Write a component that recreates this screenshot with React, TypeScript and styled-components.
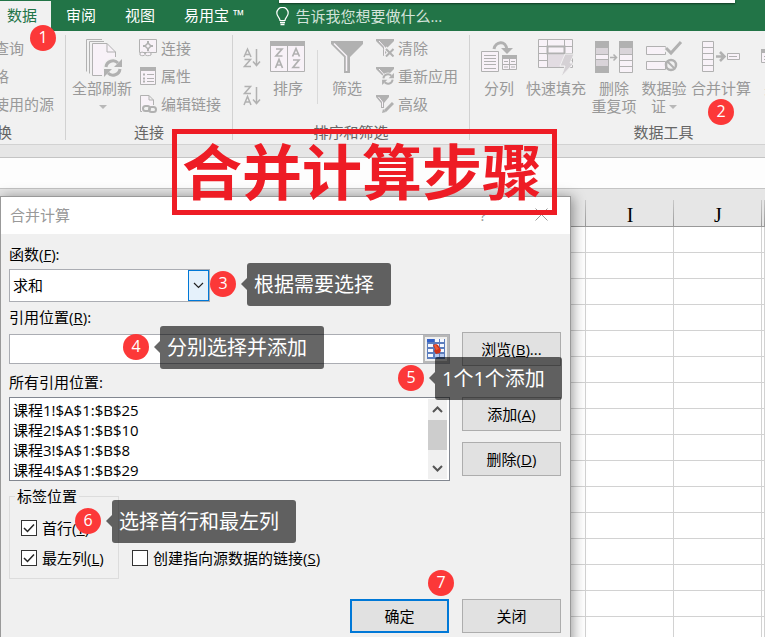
import React from "react";
import styled, { createGlobalStyle, css } from "styled-components";

const GlobalStyle = createGlobalStyle`
  *, *::before, *::after { box-sizing: border-box; }
  body {
    margin: 0;
    font: 15px/20px "Open Sans", "Noto Sans CJK SC", sans-serif;
    color: #000;
    background: #fff;
  }
  button, input, select { font: inherit; color: inherit; margin: 0; }
  #root { overflow: hidden; }
`;

const Page = styled.div`
  position: relative;
  display: flex;
  flex-direction: column;
  height: 100vh;
  overflow: hidden;
`;

/* ---------- tab strip ---------- */

const TabStrip = styled.nav`
  display: flex;
  flex: none;
  align-items: stretch;
  height: 31px;
  padding-top: 1px;
  background: #227447;
  color: #fff;
`;

const Tab = styled.button<{ $active?: boolean }>`
  border: 0;
  padding: 0 14px 3px 15px;
  background: none;
  color: #fff;
  white-space: nowrap;
  ${(p) =>
    p.$active &&
    css`
      padding-left: 7px;
      background: #f1f1f1;
      color: #227447;
    `}
`;

const TellMe = styled.button`
  display: flex;
  align-items: center;
  gap: 6px;
  margin-left: 18px;
  border: 0;
  padding: 0;
  background: none;
  color: #d3e3da;
  white-space: nowrap;
`;

const TopPopup = styled.div`
  position: absolute;
  top: 0;
  left: 279px;
  width: 456px;
  height: 3px;
  background: #fff;
  box-shadow: 0 1px 2px rgba(0, 0, 0, 0.5);
`;

/* ---------- ribbon ---------- */

const Ribbon = styled.div`
  display: flex;
  flex: none;
  height: 114px;
  padding: 4px 0;
  border-bottom: 1px solid #d2d2d2;
  background: #f1f1f1;
  color: #999;
  overflow: hidden;
`;

const Group = styled.section<{ $width: number }>`
  display: flex;
  flex: none;
  flex-direction: column;
  justify-content: space-between;
  width: ${(p) => p.$width}px;
  border-right: 1px solid #d2d2d2;
  overflow: hidden;
`;

const GroupBody = styled.div`
  display: flex;
  height: 86px;
`;

const GroupLabel = styled.div<{ $start?: boolean }>`
  line-height: 16px;
  color: #666;
  text-align: ${(p) => (p.$start ? "left" : "center")};
`;

const CutLabel = styled(GroupLabel)`
  margin-left: -3px;
`;

const CutStack = styled.div`
  margin-left: -6px;
`;

const LargeButton = styled.button<{ $width: number }>`
  display: flex;
  flex: none;
  flex-direction: column;
  align-items: center;
  gap: 2px;
  width: ${(p) => p.$width}px;
  border: 0;
  padding: 2px 0 0;
  background: none;
  line-height: 18px;
  white-space: nowrap;
`;

const SmallStack = styled.div<{ $left?: number }>`
  display: flex;
  flex-direction: column;
  margin-left: ${(p) => p.$left ?? 0}px;
`;

const SmallButton = styled.button`
  display: flex;
  align-items: center;
  gap: 4px;
  height: 28px;
  border: 0;
  padding: 0 0 2px;
  background: none;
  white-space: nowrap;
`;

const SortStack = styled.div`
  display: flex;
  flex-direction: column;
  gap: 17px;
  padding-top: 12px;
  width: 23px;
`;

const SortButton = styled.button`
  display: flex;
  border: 0;
  padding: 0;
  background: none;
`;

const Separator = styled.span`
  width: 1px;
  height: 54px;
  margin: 15px 7px 0;
  background: #d9d9d9;
`;

const Drop = styled.span`
  display: inline-block;
  border: 4px solid transparent;
  border-top-color: #b8b8b8;
  border-bottom: 0;
  margin: 2px 0 0 3px;
`;

const DropLine = styled.span`
  display: flex;
  justify-content: center;
  align-items: center;
  height: 18px;
`;

/* ---------- sheet ---------- */

const FormulaBar = styled.div`
  flex: none;
  height: 44px;
  border-top: 12px solid #e6e6e6;
  background: #fdfdfd;
  box-shadow: inset 0 1px #c4c4c4, inset 0 -1px #c4c4c4;
`;

const Workspace = styled.main`
  display: grid;
  flex: 1;
  min-height: 0;
  align-items: start;
`;

const Sheet = styled.table`
  grid-area: 1 / 1;
  width: 100%;
  table-layout: fixed;
  border-collapse: separate;
  border-spacing: 0;
  th {
    height: 38px;
    border-bottom: 1px solid #999;
    padding: 14px 0 0;
    background: linear-gradient(#c8c8c8, #999) right bottom / 1px 26px no-repeat #e6e6e6;
    font: 20px/20px "Liberation Serif", serif;
  }
  td {
    height: 26px;
    padding: 0;
    border-right: 1px solid #d2d2d2;
    border-bottom: 1px solid #d2d2d2;
    background: #fff;
  }
`;

const LeadCol = styled.col`
  width: 586px;
`;
const DataCol = styled.col`
  width: 88px;
`;

/* ---------- dialog ---------- */

const Dialog = styled.form`
  position: relative;
  grid-area: 1 / 1;
  width: 571px;
  margin-top: 7px;
  border: 1px solid #999;
  background: #f0f0f0;
  box-shadow: 2px 1px 12px rgba(0, 0, 0, 0.4);
`;

const DialogTitle = styled.header`
  display: flex;
  align-items: center;
  height: 37px;
  padding: 0 0 2px 9px;
  background: #fff;
  color: #999;
`;

const DialogName = styled.h2`
  flex: 1;
  margin: 0;
  font-size: 15px;
  font-weight: 400;
`;

const TitleButton = styled.button`
  display: flex;
  align-items: center;
  justify-content: center;
  width: 58px;
  border: 0;
  padding: 0;
  background: none;
  color: #999;
`;

const DialogBody = styled.div`
  padding: 10px 9px 20px 8px;
`;

const FieldLabel = styled.label`
  display: block;
  margin: 5px 0;
  &:first-child {
    margin-top: 0;
  }
`;

const FieldRow = styled.div`
  display: grid;
  grid-template-columns: 1fr 99px;
  column-gap: 12px;
  align-items: center;
`;

const ReferenceRow = styled(FieldRow)`
  margin-bottom: 6px;
`;

const ButtonStack = styled.div`
  display: flex;
  flex-direction: column;
  gap: 11px;
  align-self: start;
`;

const PushButton = styled.button<{ $primary?: boolean }>`
  width: 99px;
  height: 34px;
  border: ${(p) => (p.$primary ? "2px solid #0078d7" : "1px solid #adadad")};
  padding: 0;
  background: #e1e1e1;
`;

const Combo = styled.div`
  display: grid;
  width: 201px;
  height: 33px;
`;

const ComboSelect = styled.select`
  grid-area: 1 / 1;
  appearance: none;
  border: 1px solid #abadb3;
  border-radius: 0;
  padding: 0 24px 1px 3px;
  background: #fff;
`;

const ComboArrow = styled.span`
  grid-area: 1 / 1;
  z-index: 1;
  display: flex;
  align-items: center;
  justify-content: center;
  justify-self: end;
  width: 21px;
  margin: 1px;
  border: 1px solid #0078d7;
  background: #e5f1fb;
  pointer-events: none;
`;

const RefField = styled.div`
  display: flex;
  height: 30px;
  border: 1px solid #abadb3;
  background: #fff;
`;

const RefInput = styled.input`
  flex: 1;
  min-width: 0;
  border: 0;
  padding: 0 3px;
  background: none;
`;

const PickButton = styled.button`
  display: flex;
  align-items: center;
  justify-content: center;
  width: 26px;
  border: 2px solid #b8b8b8;
  padding: 0;
  background: #f0f0f0;
`;

const ListFrame = styled.div`
  display: flex;
  height: 84px;
  border: 1px solid #828790;
  padding: 1px 2px 1px 0;
  background: #fff;
`;

const ReferenceList = styled.select`
  flex: 1;
  min-width: 0;
  border: 0;
  padding: 0;
  background: none;
  outline: 0;
  overflow: hidden;
  scrollbar-width: none;
  option {
    height: 20px;
    min-height: 20px;
    padding: 0 3px;
    line-height: 20px;
  }
`;

const ScrollBar = styled.div`
  display: flex;
  flex-direction: column;
  align-items: center;
  width: 19px;
  background: #f0f0f0;
`;

const ScrollArrow = styled.button`
  display: flex;
  align-items: center;
  justify-content: center;
  width: 19px;
  height: 21px;
  border: 0;
  padding: 0;
  background: none;
`;

const ScrollThumb = styled.div`
  width: 19px;
  height: 30px;
  margin-bottom: auto;
  background: #cdcdcd;
`;

const LabelRow = styled.div`
  display: flex;
  align-items: flex-end;
  gap: 13px;
  margin: 5px 0 20px;
`;

const LabelBox = styled.fieldset`
  display: flex;
  flex-direction: column;
  gap: 10px;
  width: 110px;
  margin: 0;
  border: 1px solid #dcdcdc;
  padding: 12px 0 10px 11px;
  legend {
    margin-left: -6px;
    padding: 0 2px;
    height: 20px;
  }
`;

const Check = styled.label<{ $raised?: boolean }>`
  display: flex;
  align-items: center;
  gap: 5px;
  height: 20px;
  margin-bottom: ${(p) => (p.$raised ? 11 : 0)}px;
  white-space: nowrap;
`;

const CheckMark = styled.span`
  display: grid;
  width: 16px;
  height: 16px;
  svg {
    grid-area: 1 / 1;
    z-index: 1;
    visibility: hidden;
    pointer-events: none;
  }
  input:checked + svg {
    visibility: visible;
  }
`;

const CheckInput = styled.input`
  grid-area: 1 / 1;
  appearance: none;
  width: 16px;
  height: 16px;
  border: 1px solid #333;
  background: #fff;
`;

const Actions = styled.footer`
  display: flex;
  justify-content: flex-end;
  gap: 13px;
`;

/* ---------- annotations ---------- */

const Banner = styled.h1`
  position: absolute;
  top: 129px;
  left: 172px;
  margin: 0;
  border: 5px solid #ee1c25;
  padding: 0 10px 6px 5px;
  color: #ee1c25;
  font: 700 60px/70px "Noto Sans CJK SC", sans-serif;
  white-space: nowrap;
`;

const Badge = styled.span<{ $x: number; $y: number }>`
  position: absolute;
  left: ${(p) => p.$x}px;
  top: ${(p) => p.$y}px;
  width: 26px;
  height: 26px;
  border-radius: 50%;
  background: #fc3838;
  color: #fff;
  font-size: 16px;
  line-height: 24px;
  text-align: center;
`;

const Callout = styled.span<{ $x: number; $y: number }>`
  position: absolute;
  left: ${(p) => p.$x}px;
  top: ${(p) => p.$y}px;
  height: 43px;
  border-radius: 3px;
  padding: 0 17px 0 7px;
  background: rgba(0, 0, 0, 0.6);
  color: #fff;
  font-size: 20px;
  line-height: 44px;
  white-space: nowrap;
  &::before {
    content: "";
    position: absolute;
    left: -6px;
    top: 15px;
    border: 6px solid transparent;
    border-left: 0;
    border-right-color: rgba(0, 0, 0, 0.6);
  }
`;

/* ---------- icons ---------- */

const G = "#b1b1b1";
const F = "#f8f2f8";

type IconProps = { w?: number; h?: number; children: React.ReactNode };
const Icon = ({ w = 40, h = 40, children }: IconProps) => (
  <svg width={w} height={h} viewBox={`0 0 ${w} ${h}`} fill="none" stroke={G} aria-hidden="true">
    {children}
  </svg>
);

const RefreshArrows = () => (
  <g strokeWidth="3">
    <path d="M-7-1A7 7 0 0 1 5-5M7 1A7 7 0 0 1-5 5" />
    <path d="M9-9v8h-8zM-9 9v-8h8z" fill={G} stroke="none" />
  </g>
);

const RefreshAllIcon = () => (
  <Icon>
    <path d="M4.500 34.500V2.500H20M7.500 36.500V4.500H22" />
    <path d="M10.500 38.500V6.500H25L33.500 15V38.500Z" fill={F} stroke="none" />
    <path d="M20 38.500H10.500V6.500H25L33.500 15V20M25 6.500V15H33.500" />
    <g transform="translate(31 31)">
      <circle r="10" fill="#f1f1f1" stroke="none" />
      <RefreshArrows />
    </g>
  </Icon>
);

const ConnectionIcon = () => (
  <Icon w={18} h={18}>
    <path d="M.5.5h17v13H.5z" fill={F} />
    <path d="M9 2v2m0 6v2M4 7h2m6 0h2" strokeWidth="2" />
    <path d="M9 4l3 3-3 3-3-3z" strokeWidth="1.500" />
    <path d="M1 14c2-1.500 4-1 5 1 1-2 4-2.500 6-1v2c-2 1-5 1-6-.5-1 1.500-3 1.500-5 .5z" fill={F} />
  </Icon>
);

const PropertiesIcon = () => (
  <Icon w={18} h={18}>
    <path d="M1.500.5h15v17h-15z" fill={F} />
    <path d="M1 2h16" strokeWidth="4" />
    <path d="M8 7.500h7M8 11.500h7M8 14.500h7" />
    <path d="M4 7.500h2M4 11.500h2M4 14.500h2" strokeWidth="2" />
  </Icon>
);

const EditLinksIcon = () => (
  <Icon w={18} h={18}>
    <path d="M3 16.500H1.500V.5H10L14.500 5v5M10 .5V5h4.500" fill={F} />
    <g strokeWidth="2">
      <rect x="4" y="11" width="7" height="5" rx="2.500" fill="#f1f1f1" />
      <rect x="10" y="12" width="7" height="5" rx="2.500" />
    </g>
  </Icon>
);

const SortIcon = ({ down }: { down?: boolean }) => (
  <Icon w={18} h={21}>
    <g strokeWidth="1.500">
      <path d={down ? "M1 10L4.500 2L8 10M2 7.500h5" : "M1 20L4.500 11.500L8 20M2 17h5"} />
      <path d={down ? "M1.500 12.500H7.500L1.500 19.500H8" : "M1.500 1.500H7.500L1.500 8.500H8"} />
      <path d="M13.500 2V18M10 14.500l3.500 4 3.500-4" />
    </g>
  </Icon>
);

const SortDialogIcon = () => (
  <Icon>
    <path d="M2.500 4.500h34v30h-34z" fill={F} />
    <path d="M2 6.500h35" strokeWidth="5" />
    <path d="M19.500 8v26" />
    <g strokeWidth="1.700">
      <path d="M8 12h6L8 19h6.500M7.500 31L11 22.500L14.500 31M8.500 28h5" />
      <path d="M24.500 19.500L28 11.500L31.500 19.500M25.500 17h5M25 23h6L25 30.500h6.500" />
    </g>
  </Icon>
);

const FilterIcon = () => (
  <Icon>
    <path d="M4 4H36V7L23 20V36H17V20L4 7Z" fill={G} stroke="none" />
    <path d="M7 6.500L19.500 19V34" stroke={F} strokeWidth="1.500" />
  </Icon>
);

const SmallFunnel = () => (
  <>
    <path d="M0 0H18V2L11 9V17H7V9L0 2Z" fill={G} stroke="none" />
    <path d="M3 2L8.500 8V16" stroke={F} />
  </>
);

const ClearIcon = () => (
  <Icon w={18} h={18}>
    <SmallFunnel />
    <path d="M9 9l9 9M18 9l-9 9" stroke="#f1f1f1" strokeWidth="4" />
    <path d="M10 10l7.500 7.500M17.500 10l-7.500 7.500" strokeWidth="2" />
  </Icon>
);

const ReapplyIcon = () => (
  <Icon w={18} h={18}>
    <SmallFunnel />
    <g transform="translate(12 12) scale(.66)">
      <circle r="10" fill="#f1f1f1" stroke="none" />
      <RefreshArrows />
    </g>
  </Icon>
);

const AdvancedIcon = () => (
  <Icon w={18} h={18}>
    <path d="M0 0H13V2L8 8V13H5V8L0 2Z" fill={G} stroke="none" />
    <path d="M2.500 2L6.500 7V12" stroke={F} />
    <path d="M7 18L18 7" stroke="#f1f1f1" strokeWidth="5" />
    <path d="M9 16L17 8" strokeWidth="3" />
    <path d="M6 18l1-4 3 3z" fill={G} stroke="none" />
  </Icon>
);

const TextColumnsIcon = () => (
  <Icon>
    <path d="M2.500 14.500h17v20h-17z" fill={F} />
    <path d="M5 18.500h12M5 21.500h12M5 24.500h12M5 27.500h12M5 31.500h12" />
    <path d="M23.500 19.500h14v13h-14z" fill={F} />
    <path d="M23 20h15" strokeWidth="4" />
    <path d="M30.500 22v10M23 27.500h14M25 24.500h4M32 24.500h4M25 30h4M32 30h4" />
    <path d="M15 12C16 5 27 2 28 13" strokeWidth="3" />
    <path d="M22 11h12l-6 6z" fill={G} stroke="none" />
  </Icon>
);

const FlashFillIcon = () => (
  <Icon>
    <path d="M2.500 2.500h34v28h-34z" fill={F} />
    <path d="M2 9.500h34M2 16.500h34M2 23.500h34M11.500 2v28M28.500 2v14" />
    <path d="M12 18h16v12H12z" fill="#e2dce2" stroke="none" />
    <path d="M11.500 9.500h17v7h-17z" strokeWidth="2" />
    <path d="M29 17h9l-4 9h4L25 40l4-11h-5z" fill="#d5d1d5" stroke="#f1f1f1" />
  </Icon>
);

const DuplicatesIcon = () => (
  <Icon>
    <path d="M1.500 4.500h13v31h-13zM25.500 4.500h13v31h-13z" fill={F} />
    <path d="M1 4h14v7H1zM1 29h14v7H1zM25 4h14v7H25z" fill={G} stroke="none" />
    <path d="M2 11h12v6H2zM2 23h12v6H2zM26 11h12v6H26z" fill="#d9d4d9" stroke="none" />
    <path d="M1 17.500h14M1 22.500h14M25 17.500h14M25 23.500h14M25 29.500h14" />
    <path d="M16 20.500h6M19.500 17.500l3 3-3 3" strokeWidth="1.500" />
  </Icon>
);

const ValidationIcon = () => (
  <Icon>
    <path d="M2.500 9.500h19v8h-19zM2.500 24.500h19v8h-19z" fill={F} />
    <path d="M21 11l6 6L37 5" strokeWidth="5" stroke="#f1f1f1" />
    <path d="M22 11l5 5L37 5" strokeWidth="3" />
    <circle cx="27" cy="28" r="5" fill="#f1f1f1" strokeWidth="2.500" />
    <path d="M23.500 24.500l7 7" strokeWidth="2" />
  </Icon>
);

const ConsolidateIcon = () => (
  <Icon>
    <path d="M1.500 4.500h11v30h-11z" fill={F} />
    <path d="M1 10.500h12M1 16.500h12M1 22.500h12M1 28.500h12" />
    <path d="M15 19.500h8M19 15l4.500 4.500L19 24" strokeWidth="2.500" />
    <path d="M26.500 16.500h12v6h-12zM28 19.500h8" fill={F} />
  </Icon>
);

const RelationsIcon = () => (
  <Icon>
    <path d="M2.500 12.500h16v13h-16zM22.500 22.500h15v12h-15z" fill={F} />
    <path d="M2 14h17M22 24h16" strokeWidth="4" />
    <path d="M5 19.500h11M5 22.500h11" />
  </Icon>
);

const BulbIcon = () => (
  <svg width="13" height="19" viewBox="0 0 13 19" fill="none" stroke="#fff" aria-hidden="true">
    <path d="M4 13.500C4 10.500.8 9.500.8 6a5.700 5.700 0 0 1 11.400 0c0 3.500-3.200 4.500-3.200 7.500z" strokeWidth="1.200" />
    <path d="M4 15.500h5M4.500 17.500h4" strokeWidth="1.500" />
  </svg>
);

const Chevron = ({ up, bold }: { up?: boolean; bold?: boolean }) => (
  <svg width="11" height="7" viewBox="0 0 11 7" fill="none" stroke={bold ? "#555" : "#222"} strokeWidth={bold ? 2 : 1.2} aria-hidden="true">
    <path d={up ? "M1 6l4.500-4.500L10 6" : "M1 1l4.500 4.500L10 1"} />
  </svg>
);

const PickIcon = () => (
  <svg width="18" height="20" viewBox="0 0 18 20" aria-hidden="true">
    <path d="M0 0h18v20H0z" fill="#5b7dbd" />
    <path d="M0 0h7v3H0z" fill="#3260c8" />
    <path d="M8 0h4v3H8zM13 0h4v3h-4zM1 5h5v3H1zM8 5h4v3H8zM13 5h4v3h-4zM1 10h5v3H1zM13 10h4v3h-4zM1 15h5v3H1z" fill="#f5f8ff" />
    <path d="M8 15h4v3H8zM13 15h4v3h-4z" fill="#b5c8ee" />
    <path d="M6 6l3-1 2 1 3 5-1 3-4 1-2-3 1-2z" fill="#cf3218" />
    <path d="M7 6l2 0 3 4-3 1z" fill="#ec5a35" />
  </svg>
);

const TickIcon = () => (
  <svg width="16" height="16" viewBox="0 0 16 16" fill="none" stroke="#222" strokeWidth="1.500" aria-hidden="true">
    <path d="M3 8l3.500 3.500L13 4.500" />
  </svg>
);

/* ---------- data ---------- */

const references = ["课程1!$A$1:$B$25", "课程2!$A$1:$B$10", "课程3!$A$1:$B$8", "课程4!$A$1:$B$29"];
const badges = [
  [30, 25],
  [708, 99],
  [210, 271],
  [123, 334],
  [398, 365],
  [75, 508],
  [428, 570],
];
const callouts: [number, number, string][] = [
  [247, 263, "根据需要选择"],
  [160, 326, "分别选择并添加"],
  [435, 357, "1个1个添加"],
  [112, 500, "选择首行和最左列"],
];

type CheckFieldProps = { text: string; hotkey: string; checked?: boolean; raised?: boolean };
const CheckField = ({ text, hotkey, checked, raised }: CheckFieldProps) => (
  <Check $raised={raised}>
    <CheckMark>
      <CheckInput type="checkbox" defaultChecked={checked} />
      <TickIcon />
    </CheckMark>
    <span>
      {text}(<u>{hotkey}</u>)
    </span>
  </Check>
);

export default function App() {
  return (
    <Page>
      <GlobalStyle />
      <TabStrip>
        <Tab $active>数据</Tab>
        <Tab>审阅</Tab>
        <Tab>视图</Tab>
        <Tab>易用宝 ™</Tab>
        <TellMe>
          <BulbIcon />
          告诉我您想要做什么...
        </TellMe>
      </TabStrip>

      <Ribbon>
        <Group $width={66}>
          <CutStack>
            <SmallButton>查询</SmallButton>
            <SmallButton>格</SmallButton>
            <SmallButton>使用的源</SmallButton>
          </CutStack>
          <CutLabel $start>换</CutLabel>
        </Group>

        <Group $width={167}>
          <GroupBody>
            <SmallStack $left={5}>
              <LargeButton $width={62}>
                <RefreshAllIcon />
                <span>
                  全部刷新
                  <DropLine>
                    <Drop />
                  </DropLine>
                </span>
              </LargeButton>
            </SmallStack>
            <SmallStack $left={6}>
              <SmallButton><ConnectionIcon />连接</SmallButton>
              <SmallButton><PropertiesIcon />属性</SmallButton>
              <SmallButton><EditLinksIcon />编辑链接</SmallButton>
            </SmallStack>
          </GroupBody>
          <GroupLabel>连接</GroupLabel>
        </Group>

        <Group $width={237}>
          <GroupBody>
            <SmallStack $left={10}>
              <SortStack>
                <SortButton aria-label="升序"><SortIcon down /></SortButton>
                <SortButton aria-label="降序"><SortIcon /></SortButton>
              </SortStack>
            </SmallStack>
            <LargeButton $width={44}>
              <SortDialogIcon />
              排序
            </LargeButton>
            <Separator />
            <LargeButton $width={44}>
              <FilterIcon />
              筛选
            </LargeButton>
            <SmallStack $left={7}>
              <SmallButton><ClearIcon />清除</SmallButton>
              <SmallButton><ReapplyIcon />重新应用</SmallButton>
              <SmallButton><AdvancedIcon />高级</SmallButton>
            </SmallStack>
          </GroupBody>
          <GroupLabel>排序和筛选</GroupLabel>
        </Group>

        <Group $width={388}>
          <GroupBody>
            <SmallStack $left={6}>
              <LargeButton $width={46}>
                <TextColumnsIcon />
                分列
              </LargeButton>
            </SmallStack>
            <LargeButton $width={68}>
              <FlashFillIcon />
              快速填充
            </LargeButton>
            <LargeButton $width={48}>
              <DuplicatesIcon />
              <span>删除<br />重复项</span>
            </LargeButton>
            <LargeButton $width={52}>
              <ValidationIcon />
              <span>
                数据验
                <DropLine>证<Drop /></DropLine>
              </span>
            </LargeButton>
            <LargeButton $width={62}>
              <ConsolidateIcon />
              合并计算
            </LargeButton>
            <LargeButton $width={54}>
              <RelationsIcon />
              关系
            </LargeButton>
          </GroupBody>
          <GroupLabel>数据工具</GroupLabel>
        </Group>
      </Ribbon>

      <FormulaBar />

      <Workspace>
        <Sheet>
          <colgroup>
            <LeadCol />
            <DataCol />
            <DataCol />
            <col />
          </colgroup>
          <thead>
            <tr>
              <th />
              <th>I</th>
              <th>J</th>
              <th />
            </tr>
          </thead>
          <tbody>
            {Array.from({ length: 16 }, (_, row) => (
              <tr key={row}>
                <td />
                <td />
                <td />
                <td />
              </tr>
            ))}
          </tbody>
        </Sheet>

        <Dialog onSubmit={(e) => e.preventDefault()}>
          <DialogTitle>
            <DialogName>合并计算</DialogName>
            <TitleButton type="button">?</TitleButton>
            <TitleButton type="button" aria-label="关闭窗口">
              <svg width="13" height="13" viewBox="0 0 13 13" fill="none" stroke="#999" aria-hidden="true">
                <path d="M.5.5l12 12M12.500.5l-12 12" />
              </svg>
            </TitleButton>
          </DialogTitle>
          <DialogBody>
            <FieldLabel htmlFor="fn">函数(<u>F</u>):</FieldLabel>
            <Combo>
              <ComboSelect id="fn" defaultValue="求和">
                <option>求和</option>
              </ComboSelect>
              <ComboArrow>
                <Chevron />
              </ComboArrow>
            </Combo>

            <FieldLabel htmlFor="ref">引用位置(<u>R</u>):</FieldLabel>
            <ReferenceRow>
              <RefField>
                <RefInput id="ref" type="text" />
                <PickButton type="button" aria-label="选择区域">
                  <PickIcon />
                </PickButton>
              </RefField>
              <PushButton type="button">浏览(<u>B</u>)...</PushButton>
            </ReferenceRow>

            <FieldLabel htmlFor="all">所有引用位置:</FieldLabel>
            <FieldRow>
              <ListFrame>
                <ReferenceList id="all" size={4} multiple>
                  {references.map((r) => (
                    <option key={r}>{r}</option>
                  ))}
                </ReferenceList>
                <ScrollBar>
                  <ScrollArrow type="button" aria-label="向上"><Chevron up bold /></ScrollArrow>
                  <ScrollThumb />
                  <ScrollArrow type="button" aria-label="向下"><Chevron bold /></ScrollArrow>
                </ScrollBar>
              </ListFrame>
              <ButtonStack>
                <PushButton type="button">添加(<u>A</u>)</PushButton>
                <PushButton type="button">删除(<u>D</u>)</PushButton>
              </ButtonStack>
            </FieldRow>

            <LabelRow>
              <LabelBox>
                <legend>标签位置</legend>
                <CheckField text="首行" hotkey="T" checked />
                <CheckField text="最左列" hotkey="L" checked />
              </LabelBox>
              <CheckField text="创建指向源数据的链接" hotkey="S" raised />
            </LabelRow>

            <Actions>
              <PushButton $primary>确定</PushButton>
              <PushButton type="button">关闭</PushButton>
            </Actions>
          </DialogBody>
        </Dialog>
      </Workspace>

      <TopPopup />
      <Banner>合并计算步骤</Banner>
      {callouts.map(([x, y, text]) => (
        <Callout key={text} $x={x} $y={y}>{text}</Callout>
      ))}
      {badges.map(([x, y], i) => (
        <Badge key={i} $x={x} $y={y}>{i + 1}</Badge>
      ))}
    </Page>
  );
}
